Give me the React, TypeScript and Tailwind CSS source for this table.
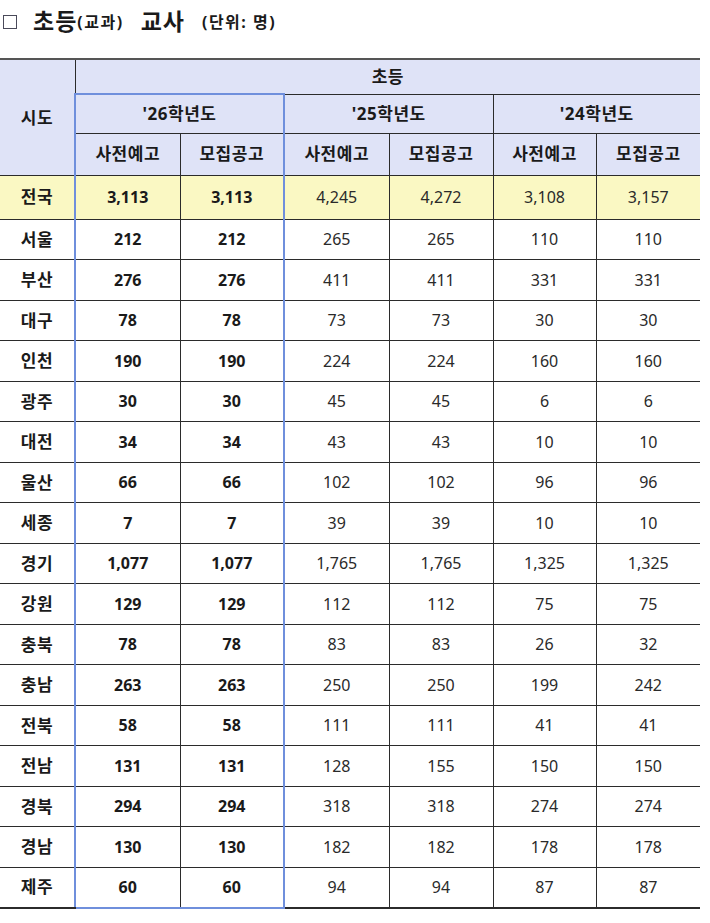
import React from 'react';

type Row = { name: string; v: string[] };

const rows: Row[] = [
  { name: '서울', v: ['212', '212', '265', '265', '110', '110'] },
  { name: '부산', v: ['276', '276', '411', '411', '331', '331'] },
  { name: '대구', v: ['78', '78', '73', '73', '30', '30'] },
  { name: '인천', v: ['190', '190', '224', '224', '160', '160'] },
  { name: '광주', v: ['30', '30', '45', '45', '6', '6'] },
  { name: '대전', v: ['34', '34', '43', '43', '10', '10'] },
  { name: '울산', v: ['66', '66', '102', '102', '96', '96'] },
  { name: '세종', v: ['7', '7', '39', '39', '10', '10'] },
  { name: '경기', v: ['1,077', '1,077', '1,765', '1,765', '1,325', '1,325'] },
  { name: '강원', v: ['129', '129', '112', '112', '75', '75'] },
  { name: '충북', v: ['78', '78', '83', '83', '26', '32'] },
  { name: '충남', v: ['263', '263', '250', '250', '199', '242'] },
  { name: '전북', v: ['58', '58', '111', '111', '41', '41'] },
  { name: '전남', v: ['131', '131', '128', '155', '150', '150'] },
  { name: '경북', v: ['294', '294', '318', '318', '274', '274'] },
  { name: '경남', v: ['130', '130', '182', '182', '178', '178'] },
  { name: '제주', v: ['60', '60', '94', '94', '87', '87'] },
];

const total = ['3,113', '3,113', '4,245', '4,272', '3,108', '3,157'];

const font = { fontFamily: '"Noto Sans", "Noto Sans CJK KR", sans-serif' };

// border class for each value column (blue box around the '26 block)
const cellBorder = (i: number) => {
  if (i === 0) return 'border-l-2 border-l-[#6f8fdc] border-r border-r-[#2b2b2b]';
  if (i === 1) return 'border-r-2 border-r-[#6f8fdc]';
  if (i === 5) return '';
  return 'border-r border-r-[#2b2b2b]';
};

const kr = 'text-[17px] tracking-[0.5px]';

export default function App() {
  return (
    <div className="w-[710px] h-[923px] bg-white text-[#1a1a1a]" style={font}>
      <div className="flex items-center h-[42px] pl-[3px] pt-[1px]">
        <span className="inline-block w-[14px] h-[14px] border border-[#4a4a5a] mr-[16px]" />
        <span className="text-[23px] font-bold tracking-[1px]">초등</span>
        <span className="text-[16px] font-bold mr-[17px] tracking-[1.5px]">(교과)</span>
        <span className="text-[23px] font-bold mr-[17px] tracking-[1px]">교사</span>
        <span className="text-[16px] font-bold tracking-[1.5px]">(단위: 명)</span>
      </div>
      <div className="mt-[16px]">
        <table className="w-[700px] border-collapse table-fixed text-[16px]">
          <colgroup>
            <col className="w-[75px]" />
            <col className="w-[105px]" />
            <col className="w-[104px]" />
            <col className="w-[105px]" />
            <col className="w-[104px]" />
            <col className="w-[103px]" />
            <col className="w-[104px]" />
          </colgroup>
          <thead className="bg-[#dfe3f7] font-bold">
            <tr className="h-[35px] border-t-2 border-t-[#555]">
              <td rowSpan={3} className={`text-center border-r border-r-[#2b2b2b] border-b border-b-[#2b2b2b] ${kr}`}>시도</td>
              <td colSpan={6} className={`text-center border-b border-b-[#2b2b2b] ${kr}`}>초등</td>
            </tr>
            <tr className="h-[39px]">
              <td colSpan={2} className={`text-center border-2 border-[#6f8fdc] border-b-[#2b2b2b] border-b ${kr}`}>'26학년도</td>
              <td colSpan={2} className={`text-center border-r border-r-[#2b2b2b] border-b border-b-[#2b2b2b] ${kr}`}>'25학년도</td>
              <td colSpan={2} className={`text-center border-b border-b-[#2b2b2b] ${kr}`}>'24학년도</td>
            </tr>
            <tr className="h-[42px]">
              {['사전예고', '모집공고', '사전예고', '모집공고', '사전예고', '모집공고'].map((t, i) => (
                <td key={i} className={`text-center border-b border-b-[#2b2b2b] ${kr} ${cellBorder(i)}`}>{t}</td>
              ))}
            </tr>
          </thead>
          <tbody>
            <tr className="h-[44px] bg-[#faf8c3]">
              <td className={`text-center font-bold border-r border-r-[#2b2b2b] border-b border-b-[#2b2b2b] ${kr}`}>전국</td>
              {total.map((t, i) => (
                <td
                  key={i}
                  className={`text-center border-b border-b-[#2b2b2b] ${i < 2 ? 'font-bold' : 'text-[#2a2a2a]'} ${cellBorder(i)}`}
                >
                  {t}
                </td>
              ))}
            </tr>
            {rows.map((r, ri) => {
              const last = ri === rows.length - 1;
              return (
                <tr key={r.name} className="h-[40.5px]">
                  <td className={`text-center font-bold border-r border-r-[#2b2b2b] ${kr} ${last ? 'border-b-2' : 'border-b'} border-b-[#2b2b2b]`}>
                    {r.name}
                  </td>
                  {r.v.map((t, i) => (
                    <td
                      key={i}
                      className={`text-center ${i < 2 ? 'font-bold' : 'text-[#2a2a2a]'} ${cellBorder(i)} ${
                        last ? (i < 2 ? 'border-b-2 border-b-[#6f8fdc]' : 'border-b-2 border-b-[#2b2b2b]') : 'border-b border-b-[#2b2b2b]'
                      }`}
                    >
                      {t}
                    </td>
                  ))}
                </tr>
              );
            })}
          </tbody>
        </table>
      </div>
    </div>
  );
}
